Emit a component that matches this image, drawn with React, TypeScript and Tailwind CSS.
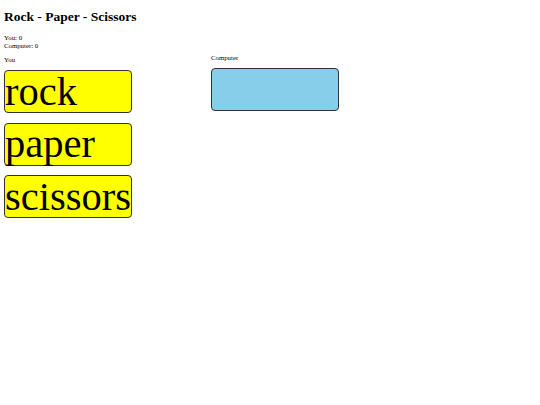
import React from 'react';

const CHOICES = ['rock', 'paper', 'scissors'];

export default function App() {
  const [you, setYou] = React.useState(0);
  const [computer, setComputer] = React.useState(0);
  const [pick, setPick] = React.useState<string | null>(null);

  function play(choice: string) {
    const other = CHOICES[Math.floor(Math.random() * 3)];
    setPick(other);
    const a = CHOICES.indexOf(choice);
    const b = CHOICES.indexOf(other);
    if (a === b) return;
    if ((a + 1) % 3 === b) setComputer((c) => c + 1);
    else setYou((y) => y + 1);
  }

  return (
    <div className="min-h-[405px] bg-white px-[4px] pt-[10px] text-black font-['Liberation_Serif',serif] text-[6.8px] leading-[7.6px]">
      <h1 className="text-[13.5px] leading-[14.7px] font-bold">Rock - Paper - Scissors</h1>
      <div className="mt-[9.5px]">
        <div>You: {you}</div>
        <div>Computer: {computer}</div>
      </div>
      <div className="flex gap-[79px] mt-[5px]">
        <div className="flex flex-col w-[128px] pt-[1.5px]">
          <div>You</div>
          <div className="flex flex-col gap-[9.5px] mt-[7px]">
            {CHOICES.map((c) => (
              <button
                key={c}
                onClick={() => play(c)}
                className="flex items-center w-[128px] h-[43px] bg-[#ffff00] border border-[#333] rounded-[4px] text-[40.5px] leading-none text-left overflow-visible whitespace-nowrap"
              >
                {c}
              </button>
            ))}
          </div>
        </div>
        <div className="flex flex-col">
          <div>Computer</div>
          <div className="mt-[6px] flex items-center w-[128px] h-[43px] bg-[#87ceeb] border border-[#333] rounded-[4px] text-[40px] leading-none">
            {pick}
          </div>
        </div>
      </div>
    </div>
  );
}
